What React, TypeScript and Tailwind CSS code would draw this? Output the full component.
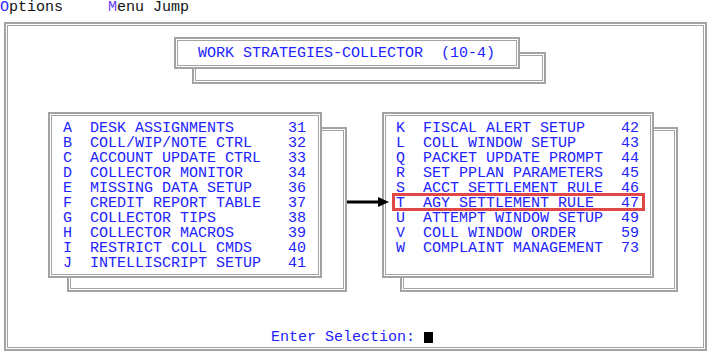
const leftItems = [
  ['A', 'DESK ASSIGNMENTS', '31'],
  ['B', 'COLL/WIP/NOTE CTRL', '32'],
  ['C', 'ACCOUNT UPDATE CTRL', '33'],
  ['D', 'COLLECTOR MONITOR', '34'],
  ['E', 'MISSING DATA SETUP', '36'],
  ['F', 'CREDIT REPORT TABLE', '37'],
  ['G', 'COLLECTOR TIPS', '38'],
  ['H', 'COLLECTOR MACROS', '39'],
  ['I', 'RESTRICT COLL CMDS', '40'],
  ['J', 'INTELLISCRIPT SETUP', '41'],
]

const rightItems = [
  ['K', 'FISCAL ALERT SETUP', '42'],
  ['L', 'COLL WINDOW SETUP', '43'],
  ['Q', 'PACKET UPDATE PROMPT', '44'],
  ['R', 'SET PPLAN PARAMETERS', '45'],
  ['S', 'ACCT SETTLEMENT RULE', '46'],
  ['T', 'AGY SETTLEMENT RULE', '47'],
  ['U', 'ATTEMPT WINDOW SETUP', '49'],
  ['V', 'COLL WINDOW ORDER', '59'],
  ['W', 'COMPLAINT MANAGEMENT', '73'],
]

// double gray rule used by every frame on the screen
const frame =
  'border-2 border-[#a3a3a3] shadow-[inset_0_0_0_1px_#ffffff,inset_0_0_0_2px_#a3a3a3]'

function MenuRows({ items }: { items: string[][] }) {
  return (
    <>
      {items.map(([key, label, num]) => (
        <div key={key} className="h-[15px] whitespace-pre">
          {`${key}  ${label.padEnd(22)}${num}`}
        </div>
      ))}
    </>
  )
}

export default function App() {
  return (
    <div className="w-[716px] h-[363px] bg-white overflow-hidden font-['Liberation_Mono',monospace] text-[15px] leading-[15px]">
      {/* menu bar */}
      <div className="h-[22px] whitespace-pre text-[#111]">
        <span className="text-[#2b2bff]">O</span>ptions{'     '}
        <span className="text-[#6a3cff]">M</span>enu Jump
      </div>

      {/* screen frame */}
      <div className={`ml-[4px] w-[703px] h-[329px] ${frame} text-[#2222ff]`}>
        {/* title */}
        <div className="relative mt-[13px] ml-[168px] w-[346px] h-[32px]">
          <div className={`absolute left-[18px] top-[15px] -right-[26px] -bottom-[15px] ${frame}`} />
          <div className={`relative z-10 h-full bg-white ${frame} flex items-center pl-[22px] whitespace-pre`}>
            WORK STRATEGIES-COLLECTOR  (10-4)
          </div>
        </div>

        {/* menus */}
        <div className="relative mt-[43px] flex">
          <div className="relative ml-[42px] w-[274px] h-[166px]">
            <div className={`absolute left-[19px] top-[15px] -right-[25px] -bottom-[14px] ${frame}`} />
            <div className={`relative z-10 h-full bg-white ${frame} pl-[13px] pt-[7px]`}>
              <MenuRows items={leftItems} />
            </div>
          </div>

          <div className="relative ml-[60px] w-[272px] h-[166px]">
            <div className={`absolute left-[18px] top-[15px] -right-[24px] -bottom-[14px] ${frame}`} />
            <div className={`relative z-10 h-full bg-white ${frame} pl-[12px] pt-[7px]`}>
              <MenuRows items={rightItems} />
            </div>
            <div className="absolute z-20 left-[10px] top-[81px] w-[253px] h-[18px] border-[3px] border-[#e04848]" />
          </div>

          <svg className="absolute z-30 left-[341px] top-[85px]" width="42" height="10" viewBox="0 0 42 10">
            <rect x="0" y="3.5" width="34" height="3" fill="#000" />
            <polygon points="31,0 42,5 31,10" fill="#000" />
          </svg>
        </div>

        {/* prompt */}
        <div className="mt-[52px] pl-[265px] whitespace-pre">
          Enter Selection:{' '}
          <span className="inline-block w-[9px] h-[11px] bg-black align-[-2px]" />
        </div>
      </div>
    </div>
  )
}
